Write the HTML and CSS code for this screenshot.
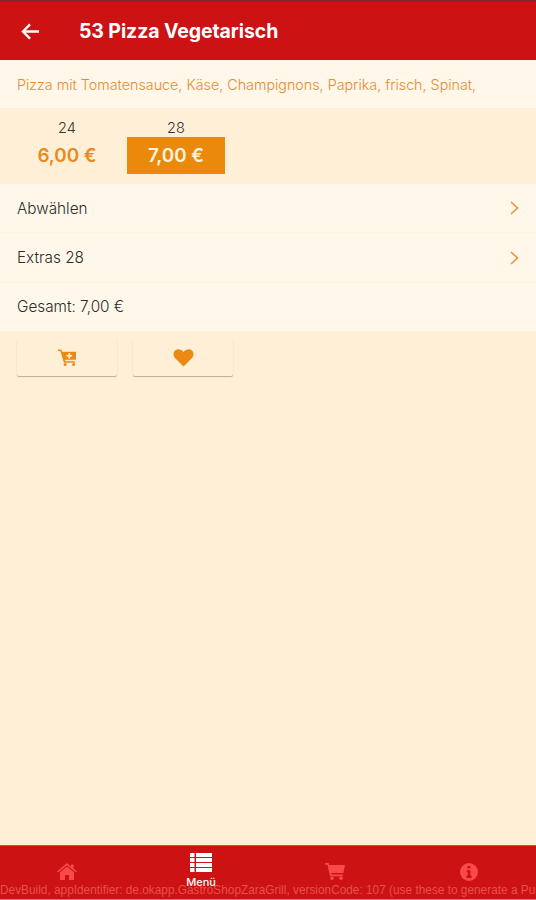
FILE: index.html
```html
<!DOCTYPE html>
<html lang="de">
<head>
  <meta charset="UTF-8" />
  <title>53 Pizza Vegetarisch</title>
  <meta name="viewport" content="width=device-width, initial-scale=1.0" />
  <link rel="stylesheet" href="styles.css">
</head>
<body>
  <div class="app">
    <header class="kopf">
      <svg class="zurueck" viewBox="0 0 20 18" width="19" height="17">
        <path d="M19 9H2M9.5 1.5L2 9l7.5 7.5" fill="none" stroke="#fff" stroke-width="2.4"/>
      </svg>
      <h1>53 Pizza Vegetarisch</h1>
    </header>

    <p class="beschreibung">Pizza mit Tomatensauce, Käse, Champignons, Paprika, frisch, Spinat,</p>

    <div class="groessen">
      <div class="groesse">
        <span class="name">24</span>
        <span class="preis">6,00 €</span>
      </div>
      <div class="groesse aktiv">
        <span class="name">28</span>
        <span class="preis">7,00 €</span>
      </div>
    </div>

    <div class="zeile">
      <span>Abwählen</span>
      <svg viewBox="0 0 9 14" width="9" height="14"><path d="M1 1l6.5 6L1 13" fill="none" stroke="#ec8f3a" stroke-width="1.6"/></svg>
    </div>
    <div class="zeile">
      <span>Extras 28</span>
      <svg viewBox="0 0 9 14" width="9" height="14"><path d="M1 1l6.5 6L1 13" fill="none" stroke="#ec8f3a" stroke-width="1.6"/></svg>
    </div>
    <div class="zeile">
      <span>Gesamt: 7,00 €</span>
    </div>

    <div class="aktionen">
      <button class="knopf">
        <svg viewBox="0 0 20 18" width="19" height="17">
          <path fill="#ea8a10" d="M0 .5h3.4l1 2.5H19v8.5H7.4l.4 1.5H18v1.6H6.3L2.4 2.2H0z"/>
          <circle cx="7.5" cy="16.3" r="1.6" fill="#ea8a10"/>
          <circle cx="16.5" cy="16.3" r="1.6" fill="#ea8a10"/>
          <path fill="#feefd6" d="M11 4.2h1.8v2.1h2.1v1.7h-2.1v2.1H11V8H8.9V6.3H11z"/>
        </svg>
      </button>
      <button class="knopf">
        <svg viewBox="0 0 20 18" width="21" height="18">
          <path fill="#ea8a10" d="M10 17.6L2 9.6C-.6 7-.5 3.4 1.6 1.6 3.9-.4 7.4 0 10 3.1 12.6 0 16.1-.4 18.4 1.6c2.1 1.8 2.2 5.4-.4 8z"/>
        </svg>
      </button>
    </div>

    <nav class="leiste">
      <div class="tab">
        <svg viewBox="0 0 20 17" width="20" height="17">
          <path fill="#f94a4a" d="M10 0l4 3.4V1.5h2.5v4L20 8.4l-1 1.2-9-7.4-9 7.4-1-1.2z"/>
          <path fill="#f94a4a" d="M10 3.6l7 5.7V17h-5v-5H8v5H3V9.3z"/>
        </svg>
      </div>
      <div class="tab aktiv">
        <svg viewBox="0 0 22 19" width="22" height="19">
          <path fill="#fff" d="M0 0h4.5v4H0zM6 0h16v4H6zM0 5h4.5v4H0zM6 5h16v4H6zM0 10h4.5v4H0zM6 10h16v4H6zM0 15h4.5v4H0zM6 15h16v4H6z"/>
        </svg>
        <span>Menü</span>
      </div>
      <div class="tab">
        <svg viewBox="0 0 20 17" width="20" height="17">
          <path fill="#f94a4a" d="M0 0h3.6l.7 2H20l-1.6 8H6.2l.4 1.6H18v1.7H5L2.4 1.7H0z"/>
          <circle cx="7" cy="15.2" r="1.8" fill="#f94a4a"/>
          <circle cx="16" cy="15.2" r="1.8" fill="#f94a4a"/>
        </svg>
      </div>
      <div class="tab">
        <svg viewBox="0 0 18 18" width="18" height="18">
          <circle cx="9" cy="9" r="9" fill="#f94a4a"/>
          <path fill="#cc1111" d="M7.6 3h2.8v2.6H7.6zM6.8 7.2h3.6v5.4h1.1V15H6.6v-2.4h1.1V9.5h-.9z"/>
        </svg>
      </div>
    </nav>

    <div class="debug">DevBuild, appIdentifier: de.okapp.GastroShopZaraGrill, versionCode: 107 (use these to generate a Push)</div>
  </div>
</body>
</html>
```

FILE: styles.css
```css
html, body {
  margin: 0;
  padding: 0;
  height: 100%;
}

body {
  font-family: Inter, 'Noto Sans', sans-serif;
  background: #feefd6;
  color: #333;
}

.app {
  position: relative;
  height: 900px;
  overflow: hidden;
  display: flex;
  flex-direction: column;
  background: #feefd6;
}

.kopf {
  height: 60px;
  box-sizing: border-box;
  padding-left: 21px;
  display: flex;
  align-items: center;
  gap: 39px;
  background: #cc1213;
  border-top: 2px solid #7a2a2a;
  box-shadow: 0 1px 1px rgba(120,40,40,0.45);
}

h1 {
  margin: 0;
  color: #fff;
  font-size: 19.5px;
  font-weight: 700;
  letter-spacing: -0.1px;
}

.beschreibung {
  margin: 0;
  height: 48px;
  line-height: 50px;
  padding-left: 17px;
  font-size: 14.3px;
  font-weight: 300;
  color: #ea8a2e;
  background: #fff7e9;
  white-space: nowrap;
}

.groessen {
  height: 76px;
  box-sizing: border-box;
  padding: 11px 0 0 17px;
  display: flex;
  gap: 9px;
}

.groesse {
  width: 100px;
  display: flex;
  flex-direction: column;
  align-items: center;
}

.name {
  font-size: 14.5px;
  font-weight: 300;
  line-height: 18px;
  color: #333;
}

.preis {
  width: 98px;
  height: 37px;
  line-height: 37px;
  text-align: center;
  font-size: 18.8px;
  font-weight: 600;
  color: #e98a1e;
}

.groesse.aktiv .preis {
  background: #ea8a0c;
  color: #fff3e0;
}

.zeile {
  height: 49.4px;
  box-sizing: border-box;
  padding: 0 17px;
  display: flex;
  align-items: center;
  justify-content: space-between;
  font-size: 15.3px;
  font-weight: 300;
  color: #2c2c2c;
  background: #fff8ea;
  border-bottom: 1px solid #fdf1dd;
}

.aktionen {
  padding: 7px 17px 0;
  display: flex;
  gap: 16px;
}

.knopf {
  width: 100px;
  height: 37px;
  padding: 0;
  border: none;
  border-radius: 2px;
  display: flex;
  align-items: center;
  justify-content: center;
  background: #feefd6;
  box-shadow: 0 1px 1px rgba(120,90,50,0.45);
}

.leiste {
  margin-top: auto;
  height: 55px;
  box-sizing: border-box;
  display: flex;
  background: #cc1213;
  border-top: 1px solid #dd4a2a;
  border-bottom: 1px solid #a98a88;
}

.tab {
  flex: 1;
  display: flex;
  flex-direction: column;
  align-items: center;
  padding-top: 17px;
}

.tab.aktiv {
  padding-top: 7px;
}

.tab span {
  color: #fff;
  font-size: 11px;
  font-weight: 500;
  line-height: 14px;
  margin-top: 3px;
}

.debug {
  position: absolute;
  left: 0;
  bottom: 3px;
  color: #e8504c;
  font-family: 'Liberation Sans', sans-serif;
  font-size: 11.85px;
  line-height: 14px;
  white-space: nowrap;
}
```
